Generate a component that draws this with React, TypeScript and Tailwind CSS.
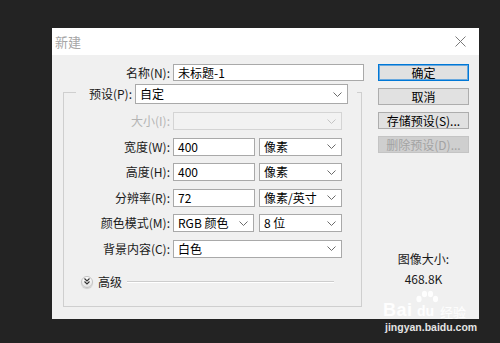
import React from "react";

const FONT = "font-['Microsoft_YaHei','Noto_Sans_CJK_SC',sans-serif]";

function Chev({ color = "#6b6b6b" }: { color?: string }) {
  return (
    <svg width="9" height="5" viewBox="0 0 9 5" className="shrink-0">
      <path d="M0.5 0.5 L4.5 4.5 L8.5 0.5" fill="none" stroke={color} strokeWidth="1" />
    </svg>
  );
}

function Label({ children, disabled }: { children: React.ReactNode; disabled?: boolean }) {
  return (
    <div className={`w-[106px] shrink-0 text-right whitespace-nowrap ${disabled ? "text-[#b4b4b4]" : "text-[#1a1a1a]"}`}>
      {children}
    </div>
  );
}

function Input({ value, className }: { value: string; className: string }) {
  return (
    <div className={`flex items-center h-full bg-white border border-[#a9a9a9] pl-[4px] text-black ${className}`}>
      {value}
    </div>
  );
}

function Select({ value, className, disabled }: { value?: string; className: string; disabled?: boolean }) {
  return (
    <div
      className={`flex items-center justify-between h-full border pl-[4px] pr-[5px] ${
        disabled ? "bg-[#f2f2f2] border-[#d4d4d4]" : "bg-white border-[#a9a9a9] text-black"
      } ${className}`}
    >
      <span className="whitespace-nowrap">{value}</span>
      <Chev color={disabled ? "#c4c4c4" : "#6b6b6b"} />
    </div>
  );
}

function Button({
  children,
  primary,
  disabled,
}: {
  children: React.ReactNode;
  primary?: boolean;
  disabled?: boolean;
}) {
  return (
    <div
      className={`h-[17px] w-full flex items-center justify-center border whitespace-nowrap ${
        primary
          ? "bg-[#e1e1e1] border-[#0078d7] shadow-[inset_0_0_0_1px_#69a8dd] text-black"
          : disabled
          ? "bg-[#cfcfcf] border-[#c4c4c4] text-[#a3a3a3]"
          : "bg-[#e1e1e1] border-[#adadad] text-black"
      }`}
    >
      {children}
    </div>
  );
}

export default function App() {
  return (
    <div className={`relative w-[500px] h-[343px] bg-[#232323] pl-[52px] pt-[28px] overflow-hidden text-[12px] leading-none ${FONT}`}>
      <div className="w-[427px] h-[291px] flex flex-col">
        {/* title bar */}
        <div className="h-[27px] bg-white flex items-center justify-between pl-[3px] pr-[13px]">
          <span className="text-[13px] text-[#a6a6a6]">新建</span>
          <svg width="11" height="11" viewBox="0 0 11 11">
            <path d="M0.5 0.5 L10.5 10.5 M10.5 0.5 L0.5 10.5" stroke="#7a7a7a" strokeWidth="1" fill="none" />
          </svg>
        </div>
        {/* body */}
        <div className="flex-1 bg-[#f0f0f0] flex pt-[9px]">
          {/* left column */}
          <div className="w-[326px] shrink-0 flex flex-col">
            <div className="flex items-center h-[17px]">
              <div className="w-[118px] text-right text-[#1a1a1a]">名称(N):</div>
              <Input value="未标题-1" className="ml-[3px] w-[191px]" />
            </div>
            {/* group box */}
            <div className="ml-[11px] mt-[11px] w-[299px] h-[215px] border border-[#cfcfcf] flex flex-col">
              <div className="-mt-[9px] ml-[12px] w-[281px] h-[20px] bg-[#f0f0f0] flex items-center pr-[9px]">
                <div className="w-[56px] text-right text-[#1a1a1a]">预设(P):</div>
                <Select value="自定" className="ml-[3px] w-[213px]" />
              </div>
              <div className="mt-[8px] flex flex-col gap-[7.5px]">
                <div className="flex items-center h-[18px]">
                  <Label disabled>大小(I):</Label>
                  <Select className="ml-[3px] w-[169px]" disabled />
                </div>
                <div className="flex items-center h-[18px]">
                  <Label>宽度(W):</Label>
                  <Input value="400" className="ml-[3px] w-[82px]" />
                  <Select value="像素" className="ml-[4px] w-[83px]" />
                </div>
                <div className="flex items-center h-[18px]">
                  <Label>高度(H):</Label>
                  <Input value="400" className="ml-[3px] w-[82px]" />
                  <Select value="像素" className="ml-[4px] w-[83px]" />
                </div>
                <div className="flex items-center h-[18px]">
                  <Label>分辨率(R):</Label>
                  <Input value="72" className="ml-[3px] w-[82px]" />
                  <Select value="像素/英寸" className="ml-[4px] w-[83px]" />
                </div>
                <div className="flex items-center h-[18px]">
                  <Label>颜色模式(M):</Label>
                  <Select value="RGB 颜色" className="ml-[3px] w-[81px]" />
                  <Select value="8 位" className="ml-[5px] w-[83px]" />
                </div>
                <div className="flex items-center h-[18px]">
                  <Label>背景内容(C):</Label>
                  <Select value="白色" className="ml-[3px] w-[169px]" />
                </div>
              </div>
              <div className="mt-[16px] h-[16px] flex items-center pl-[17px] pr-[27px]">
                <div className="w-[12px] h-[12px] rounded-full border border-[#c2c2c2] bg-gradient-to-b from-white to-[#e4e4e4] flex items-center justify-center shadow-[0_1px_1px_rgba(0,0,0,0.15)]">
                  <svg width="6" height="7" viewBox="0 0 6 7">
                    <path d="M0.5 0.5 L3 3 L5.5 0.5 M0.5 3.5 L3 6 L5.5 3.5" fill="none" stroke="#333" strokeWidth="1.1" />
                  </svg>
                </div>
                <span className="ml-[5px] text-[#1a1a1a]">高级</span>
                <div className="ml-[5px] flex-1 h-[2px] border-t border-[#cdcdcd] border-b border-b-white" />
              </div>
            </div>
          </div>
          {/* right column */}
          <div className="w-[91px] shrink-0 flex flex-col">
            <div className="flex flex-col gap-[7px]">
              <Button primary>确定</Button>
              <Button>取消</Button>
              <Button>存储预设(S)...</Button>
              <Button disabled>删除预设(D)...</Button>
            </div>
            <div className="mt-[98px] h-[16px] flex items-center justify-center text-[#1a1a1a]">图像大小:</div>
            <div className="mt-[4px] h-[16px] flex items-center justify-center text-[#1a1a1a]">468.8K</div>
          </div>
        </div>
      </div>

      {/* Baidu watermark */}
      <div className="absolute left-[383px] top-[290px] w-[92px] h-[29px] text-white/90 font-['Liberation_Sans',sans-serif] font-bold">
        <span className="absolute left-0 top-[11px] text-[18px] leading-none tracking-[0.5px]">Bai</span>
        <svg className="absolute left-[32px] top-0" width="24" height="14" viewBox="0 0 24 14">
          <ellipse cx="4" cy="9" rx="2.6" ry="3.2" fill="rgba(255,255,255,0.9)" />
          <ellipse cx="9.5" cy="4" rx="2.6" ry="3.3" fill="rgba(255,255,255,0.9)" />
          <ellipse cx="15.5" cy="4" rx="2.6" ry="3.3" fill="rgba(255,255,255,0.9)" />
          <ellipse cx="20.5" cy="9" rx="2.6" ry="3.2" fill="rgba(255,255,255,0.9)" />
        </svg>
        <span className="absolute left-[34px] top-[14px] text-[14px] leading-none">du</span>
        <span className={`absolute left-[57px] top-[15px] text-[13px] leading-none font-normal ${FONT}`}>经验</span>
      </div>
      <div className="absolute left-[385px] top-[322px] text-[10.5px] leading-none text-[#e4e4e4] font-bold font-['Liberation_Sans',sans-serif]">
        jingyan.baidu.com
      </div>
    </div>
  );
}
